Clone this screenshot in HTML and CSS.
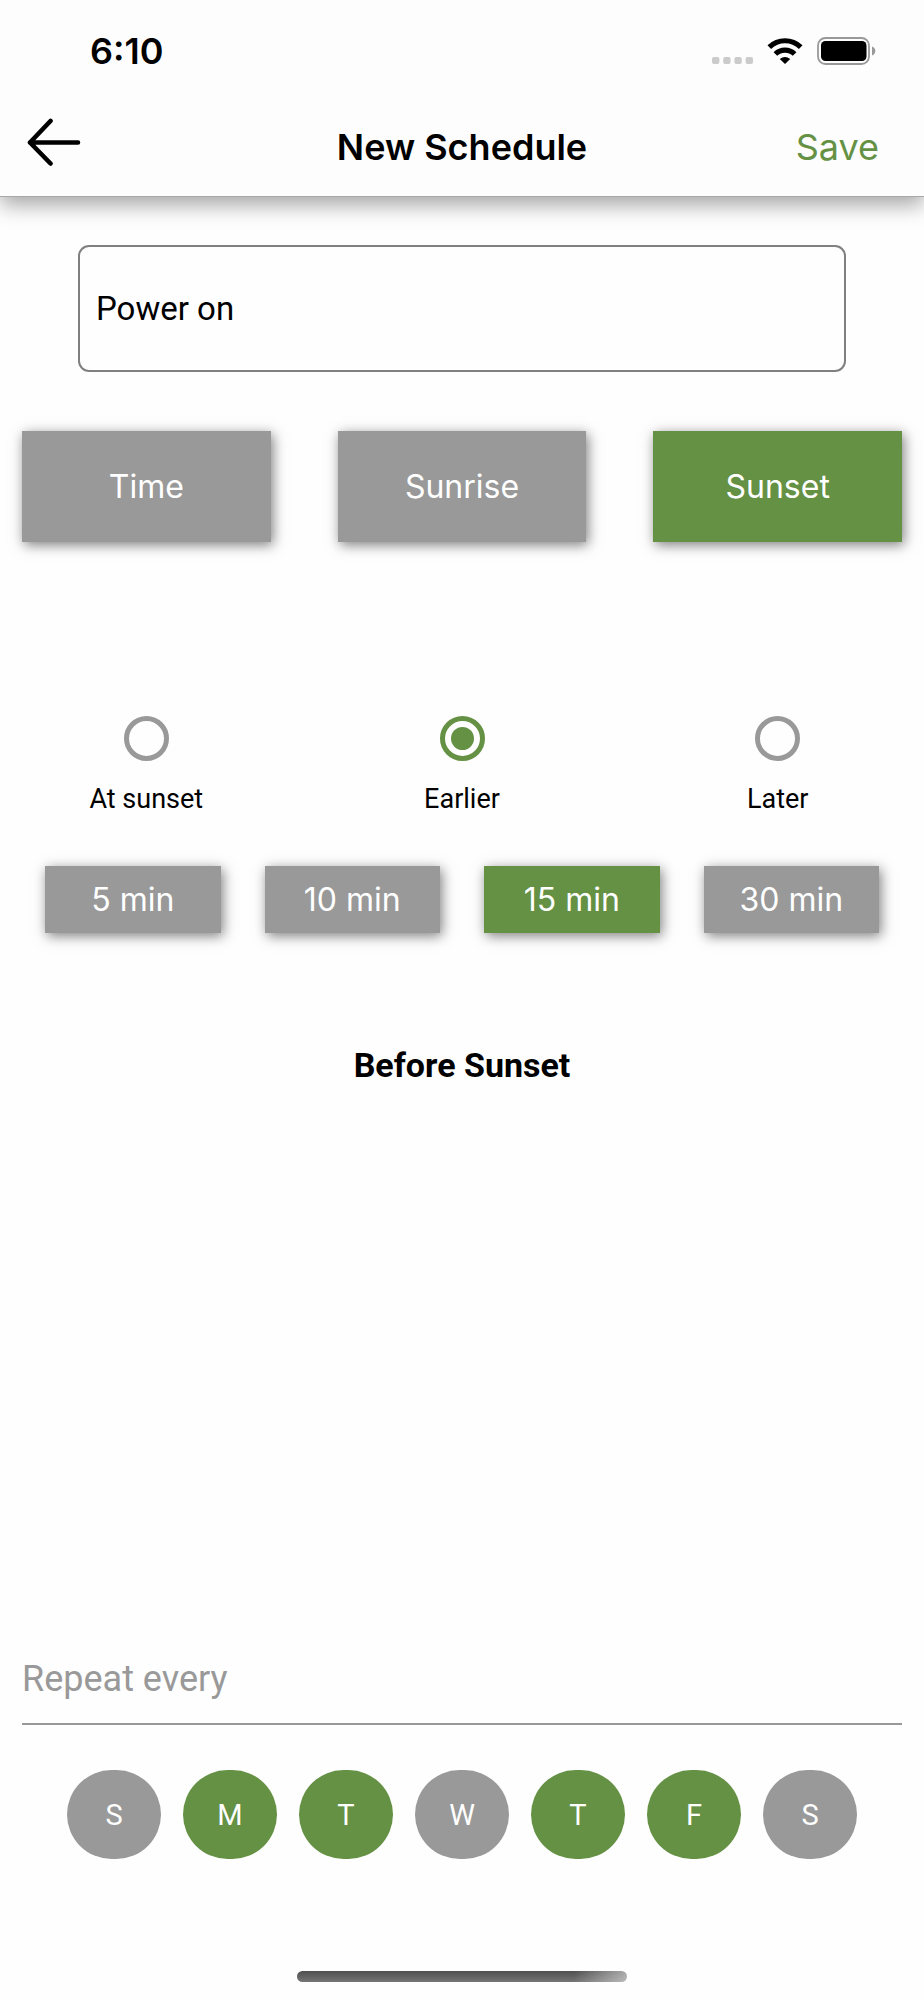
FILE: index.html
```html
<!DOCTYPE html>
<html lang="en">
<head>
  <meta charset="UTF-8">
  <meta name="viewport" content="width=device-width, initial-scale=1.0">
  <title>New Schedule</title>
  <link rel="stylesheet" href="styles.css">
</head>
<body>
  <header class="header">
    <div class="status-bar">
      <span class="status-time">6:10</span>
      <div class="status-icons">
        <svg class="icon-signal" width="41" height="26" viewBox="0 0 41 26" fill="#cbcbcb">
          <rect x="0" y="19" width="7.4" height="7" rx="2"/>
          <rect x="11.2" y="19" width="7.4" height="7" rx="2"/>
          <rect x="22.4" y="19" width="7.4" height="7" rx="2"/>
          <rect x="33.6" y="19" width="7.4" height="7" rx="2"/>
        </svg>
        <svg class="icon-wifi" width="36" height="26" viewBox="0 0 36 26">
          <g fill="none" stroke="#000" stroke-width="5.2">
            <path d="M2.3 9.1A22.6 22.6 0 0 1 33.7 9.1"/>
            <path d="M8.4 16A13.8 13.8 0 0 1 27.6 16"/>
          </g>
          <path d="M12.8 20.9Q18 16.9 23.2 20.9L18 26Z"/>
        </svg>
        <svg class="icon-battery" width="59" height="28" viewBox="0 0 59 28">
          <rect x="1" y="1" width="51" height="26" rx="7.5" fill="none" stroke="#999" stroke-width="1.8"/>
          <rect x="4" y="4" width="45.5" height="20" rx="4.5"/>
          <path d="M55 9.5C59.4 11 59.4 17 55 18.5Z" fill="#999"/>
        </svg>
      </div>
    </div>
    <nav class="nav">
      <button class="back-btn" type="button" aria-label="Back">
        <svg width="54" height="58" viewBox="0 0 54 58" fill="none" stroke="#000" stroke-width="4.6" stroke-linecap="round" stroke-linejoin="round">
          <path d="M51 24.5H3M23.5 3L3 24.5L23.5 45.5"/>
        </svg>
      </button>
      <h1 class="title">New Schedule</h1>
      <button class="save-btn" type="button">Save</button>
    </nav>
  </header>

  <main class="content">
    <input class="name-input" type="text" value="Power on" aria-label="Schedule name">

    <div class="mode-row">
      <button class="btn" type="button">Time</button>
      <button class="btn" type="button">Sunrise</button>
      <button class="btn active" type="button">Sunset</button>
    </div>

    <div class="offset-row">
      <label class="offset">
        <input class="radio" type="radio" name="offset">
        At sunset
      </label>
      <label class="offset">
        <input class="radio" type="radio" name="offset" checked>
        Earlier
      </label>
      <label class="offset">
        <input class="radio" type="radio" name="offset">
        Later
      </label>
    </div>

    <div class="minute-row">
      <button class="btn" type="button">5 min</button>
      <button class="btn" type="button">10 min</button>
      <button class="btn active" type="button">15 min</button>
      <button class="btn" type="button">30 min</button>
    </div>

    <p class="summary">Before Sunset</p>
  </main>

  <section class="repeat">
    <h2 class="repeat-title">Repeat every</h2>
    <div class="days">
      <button class="day" type="button">S</button>
      <button class="day active" type="button">M</button>
      <button class="day active" type="button">T</button>
      <button class="day" type="button">W</button>
      <button class="day active" type="button">T</button>
      <button class="day active" type="button">F</button>
      <button class="day" type="button">S</button>
    </div>
  </section>

  <div class="home-indicator"></div>
</body>
</html>
```

FILE: styles.css
```css
* {
  margin: 0;
  padding: 0;
  box-sizing: border-box;
}

body {
  font-family: Roboto, sans-serif;
  background: #fefefe;
  color: #000;
  min-height: 100vh;
  display: flex;
  flex-direction: column;
}

button {
  border: none;
  cursor: pointer;
}

/* Header */
.header {
  font-family: Inter, sans-serif;
  background: #fdfdfd;
  border-bottom: 1px solid #a8a8a8;
  box-shadow: 0 8px 20px rgba(0, 0, 0, 0.35);
}

.status-bar {
  height: 98px;
  padding: 4px 48px 0 90px;
  display: flex;
  justify-content: space-between;
  align-items: center;
}

.status-time {
  font-size: 36px;
  font-weight: 600;
}

.status-icons {
  display: flex;
  align-items: center;
  gap: 14px;
}

.nav {
  height: 98px;
  padding: 0 45px;
  display: grid;
  grid-template-columns: 1fr auto 1fr;
  align-items: center;
}

.back-btn {
  margin-left: -18px;
  background: none;
  justify-self: start;
  display: flex;
}

.title {
  font-size: 36px;
  font-weight: 600;
}

.save-btn {
  font-family: inherit;
  font-size: 36px;
  color: #659144;
  background: none;
  justify-self: end;
}

/* Form */
.content {
  padding: 48px 22px 0;
}

.name-input {
  display: block;
  width: calc(100% - 112px);
  height: 127px;
  margin: 0 auto 59px;
  padding: 0 16px;
  font-family: inherit;
  font-size: 33px;
  background: #fefefe;
  border: 2px solid #808080;
  border-radius: 11px;
  outline: none;
}

.btn {
  flex: 1;
  height: 67px;
  font-family: Inter, sans-serif;
  font-size: 32px;
  color: #fff;
  background: #999;
  box-shadow: 2px 3px 12px rgba(0, 0, 0, 0.5);
}

.active {
  background: #659144;
}

.mode-row {
  display: flex;
  gap: 67px;
}

.mode-row .btn {
  height: 111px;
}

.offset-row {
  margin-top: 174px;
  display: flex;
  gap: 67px;
}

.offset {
  flex: 1;
  display: flex;
  flex-direction: column;
  align-items: center;
  gap: 22px;
  font-size: 27px;
  line-height: 32px;
}

.radio {
  appearance: none;
  width: 45px;
  height: 45px;
  border: 5px solid #999;
  border-radius: 50%;
}

.radio:checked {
  border-color: #659144;
  background: #659144;
  background-clip: content-box;
  padding: 6px;
}

.minute-row {
  margin: 51px 23px 0;
  display: flex;
  gap: 44px;
}

.summary {
  margin-top: 112px;
  font-size: 34px;
  font-weight: bold;
  line-height: 40px;
  text-align: center;
}

/* Repeat days */
.repeat {
  margin-top: auto;
  padding: 0 22px 112px;
}

.repeat-title {
  padding-bottom: 22px;
  font-size: 36px;
  font-weight: normal;
  line-height: 44px;
  color: #999;
  border-bottom: 2px solid #999;
}

.days {
  margin-top: 45px;
  display: flex;
  justify-content: center;
  gap: 22px;
}

.day {
  width: 94px;
  height: 89px;
  font-family: inherit;
  font-size: 29px;
  color: #fff;
  background: #999;
  border-radius: 45px;
}

.day.active {
  background: #659144;
}

.home-indicator {
  width: 330px;
  height: 11px;
  margin: 0 auto 18px;
  border-radius: 6px;
  background: linear-gradient(90deg, transparent 84%, rgba(255, 255, 255, 0.5)), linear-gradient(#505050, #757575);
}
```
